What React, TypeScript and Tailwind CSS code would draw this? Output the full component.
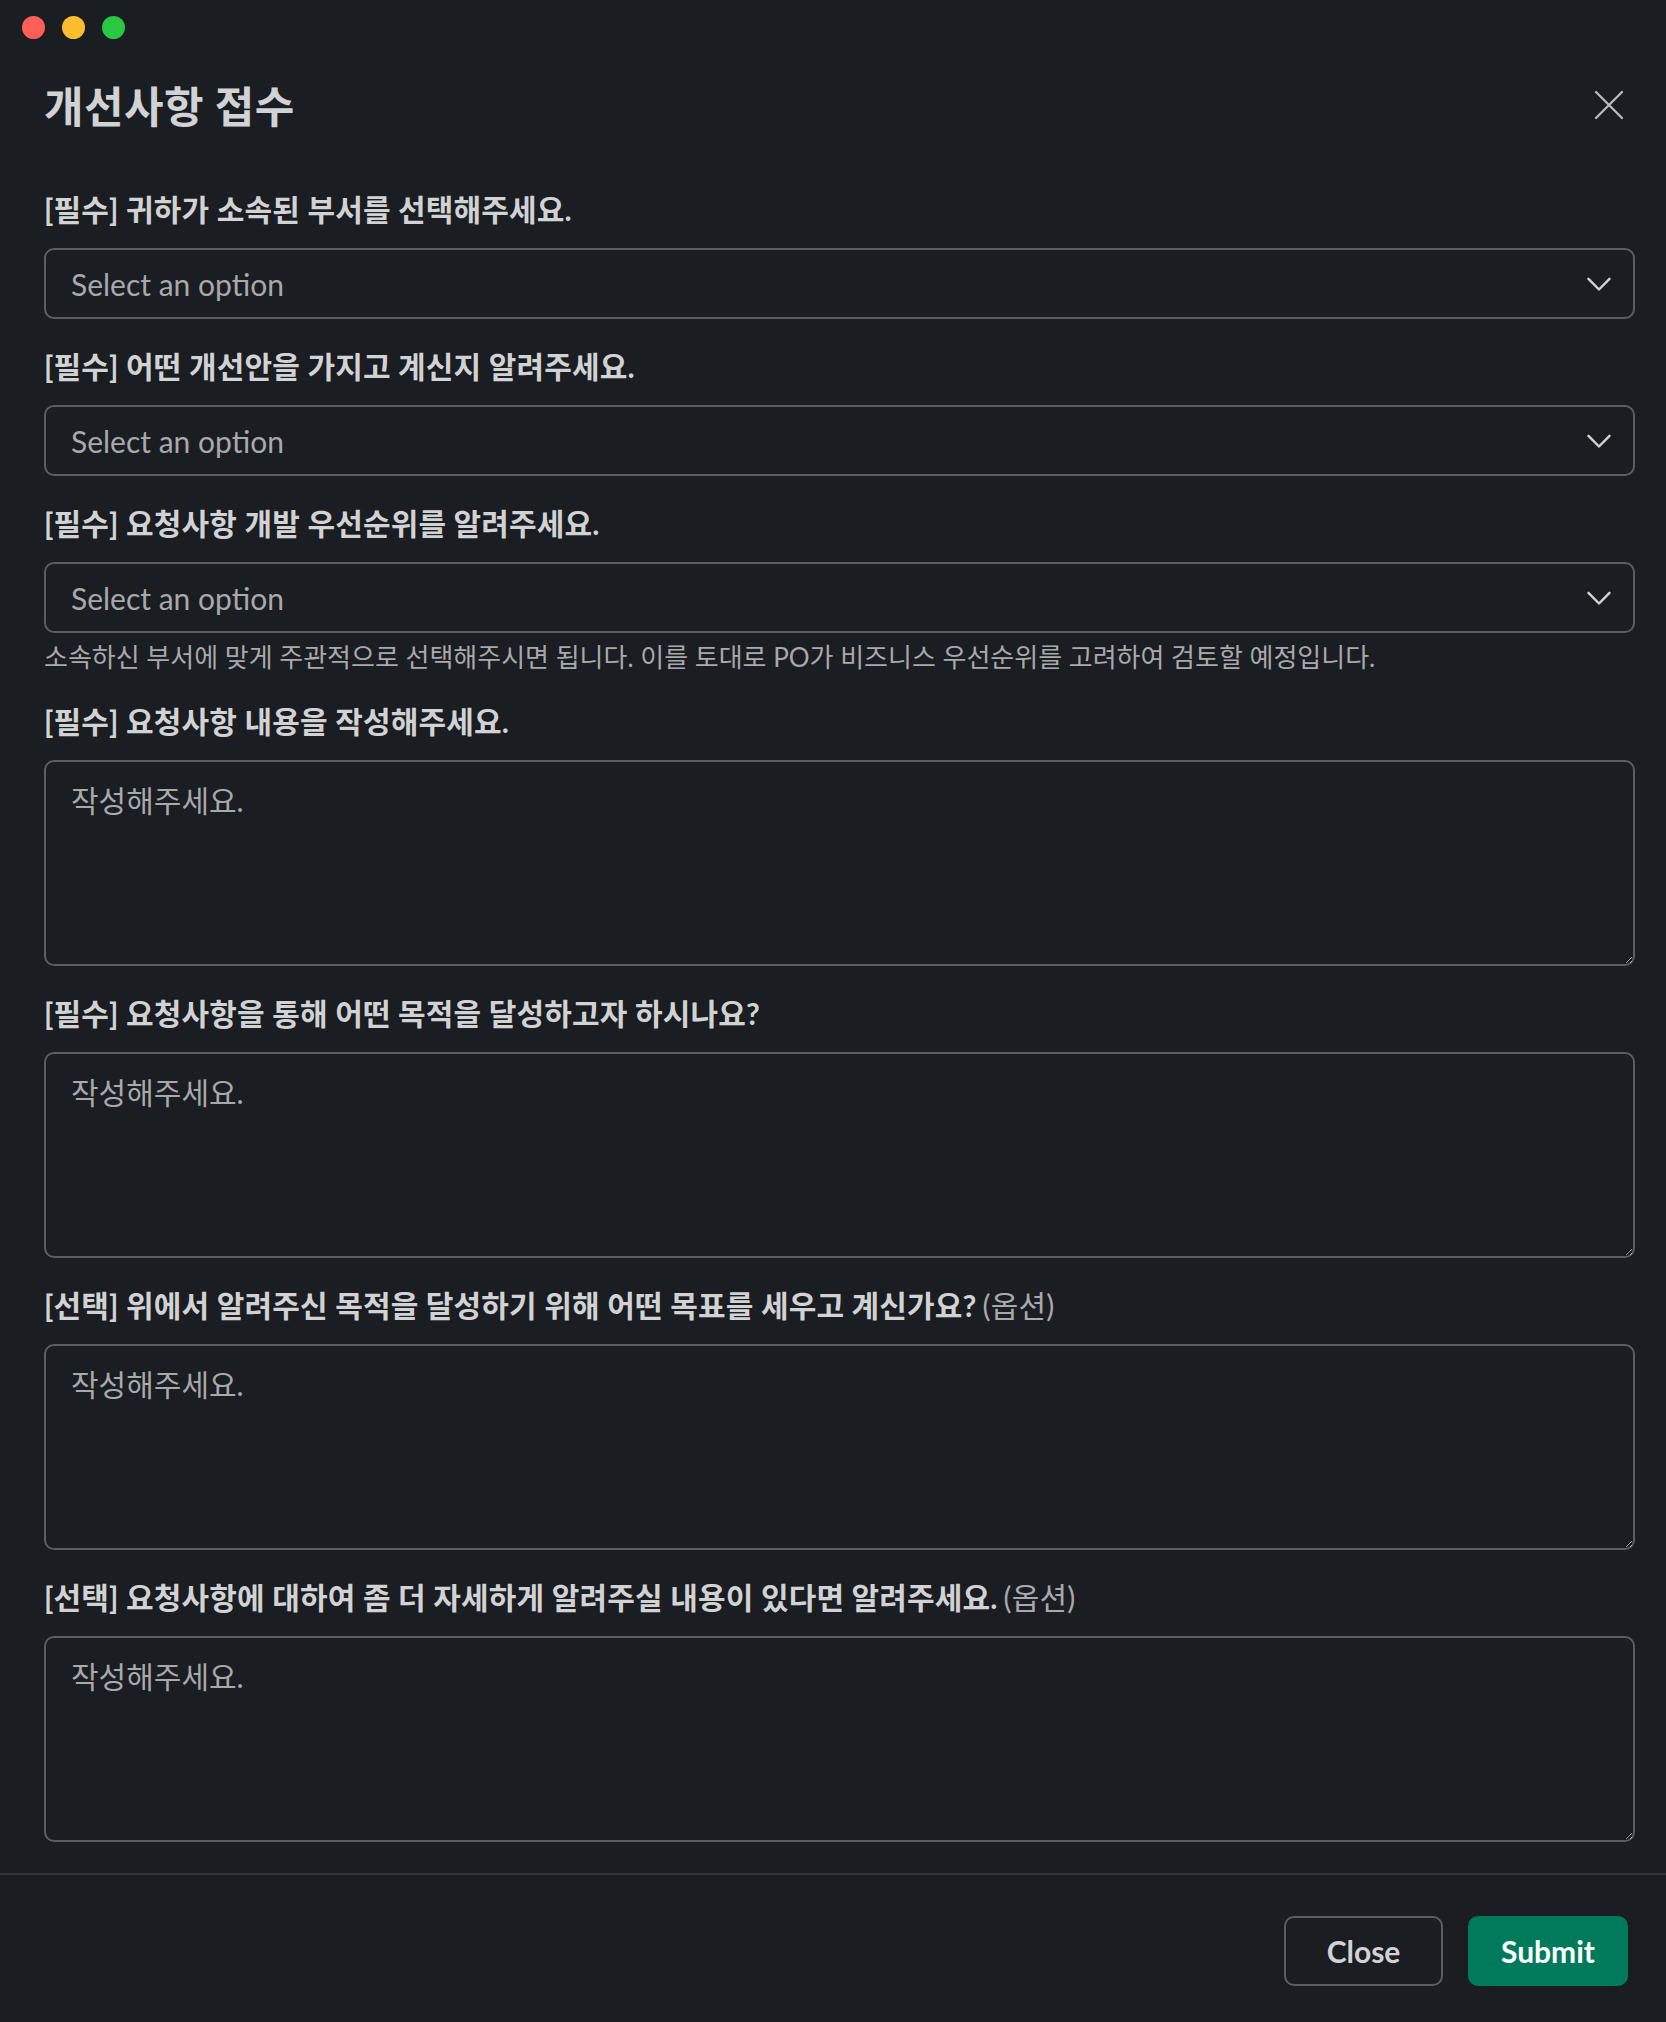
import React from "react";

const font = "font-['Lato','Noto_Sans_CJK_KR',sans-serif]";

function Chevron() {
  return (
    <svg width="24" height="15" viewBox="0 0 24 15" fill="none" className="shrink-0">
      <polyline points="1.5,1.8 12,12.5 22.5,1.8" stroke="#d1d2d3" strokeWidth="2.4" strokeLinecap="round" strokeLinejoin="round" />
    </svg>
  );
}

function Label({ text, optional }: { text: string; optional?: boolean }) {
  return (
    <div className="mb-[21px] h-[36px] whitespace-nowrap text-[30px] leading-[36px] font-bold tracking-[0.005em] text-[#d1d2d3]">
      {text}
      {optional && <span className="ml-[6px] font-normal text-[#a8a9ab]">(옵션)</span>}
    </div>
  );
}

function SelectField({ label }: { label: string }) {
  return (
    <div>
      <Label text={label} />
      <button
        type="button"
        className="flex h-[71px] w-full items-center justify-between rounded-[10px] border-2 border-[#5b5d60] pl-[25px] pr-[22px] pt-[2px] text-left"
      >
        <span className="text-[30px] text-[#a8a9ab]">Select an option</span>
        <Chevron />
      </button>
    </div>
  );
}

function TextField({ label, optional }: { label: string; optional?: boolean }) {
  return (
    <div>
      <Label text={label} optional={optional} />
      <textarea
        placeholder="작성해주세요."
        className="block h-[206px] w-full resize-y rounded-[10px] border-2 border-[#5b5d60] bg-transparent px-[25px] pb-[14px] pt-[17px] text-[30px] leading-[42px] text-[#d1d2d3] outline-none [color-scheme:dark] placeholder:text-[#a8a9ab]"
      />
    </div>
  );
}

export default function App() {
  return (
    <div className={`${font} flex h-[2022px] w-[1666px] flex-col overflow-hidden bg-[#1a1d21]`}>
      {/* window controls */}
      <div className="flex gap-[17px] pl-[22px] pt-[16px]">
        <span className="h-[23px] w-[23px] rounded-full bg-[#ff5f57]" />
        <span className="h-[23px] w-[23px] rounded-full bg-[#febc2e]" />
        <span className="h-[23px] w-[23px] rounded-full bg-[#28c840]" />
      </div>

      {/* header */}
      <div className="flex items-center justify-between pl-[44px] pr-[42px] pt-[43px]">
        <h1 className="text-[43px] leading-[50px] font-bold tracking-[0.01em] text-[#d1d2d3]">개선사항 접수</h1>
        <button type="button" className="-mt-[4px]">
          <svg width="30" height="30" viewBox="0 0 30 30" fill="none">
            <path d="M2 2 L28 28 M28 2 L2 28" stroke="#b9babd" strokeWidth="2.3" strokeLinecap="round" />
          </svg>
        </button>
      </div>

      {/* body */}
      <div className="flex flex-col gap-[29px] pl-[44px] pr-[31px] pt-[59px]">
        <SelectField label="[필수] 귀하가 소속된 부서를 선택해주세요." />
        <SelectField label="[필수] 어떤 개선안을 가지고 계신지 알려주세요." />
        <div>
          <SelectField label="[필수] 요청사항 개발 우선순위를 알려주세요." />
          <p className="mt-[7px] text-[26px] leading-[34px] text-[#a8a9ab]">
            소속하신 부서에 맞게 주관적으로 선택해주시면 됩니다. 이를 토대로 PO가 비즈니스 우선순위를 고려하여 검토할 예정입니다.
          </p>
        </div>
        <TextField label="[필수] 요청사항 내용을 작성해주세요." />
        <TextField label="[필수] 요청사항을 통해 어떤 목적을 달성하고자 하시나요?" />
        <TextField label="[선택] 위에서 알려주신 목적을 달성하기 위해 어떤 목표를 세우고 계신가요?" optional />
        <TextField label="[선택] 요청사항에 대하여 좀 더 자세하게 알려주실 내용이 있다면 알려주세요." optional />
      </div>

      {/* footer */}
      <div className="mt-[31px] flex justify-end gap-[25px] border-t-2 border-[#34363a] pr-[38px] pt-[41px]">
        <button
          type="button"
          className="h-[70px] w-[159px] rounded-[10px] border-2 border-[#5b5d60] text-[30px] font-bold text-[#d1d2d3]"
        >
          Close
        </button>
        <button type="button" className="h-[70px] w-[160px] rounded-[10px] bg-[#007a5a] text-[30px] font-bold text-white">
          Submit
        </button>
      </div>
    </div>
  );
}
